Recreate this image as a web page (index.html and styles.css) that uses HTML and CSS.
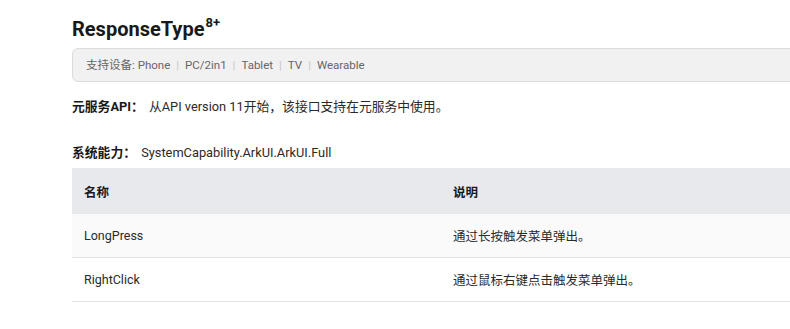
FILE: index.html
```html
<!DOCTYPE html>
<html lang="zh-CN">
<head>
<meta charset="utf-8">
<link rel="stylesheet" href="styles.css">
</head>
<body>
<main class="doc">
  <h2 class="title">ResponseType<sup class="ver">8+</sup></h2>
  <div class="devices">支持设备: Phone<span class="sep">|</span>PC/2in1<span class="sep">|</span>Tablet<span class="sep">|</span>TV<span class="sep">|</span>Wearable</div>
  <p class="meta meta-api"><b>元服务API：</b> 从API version 11开始，该接口支持在元服务中使用。</p>
  <p class="meta meta-cap"><b>系统能力：</b> SystemCapability.ArkUI.ArkUI.Full</p>
  <table class="tbl">
    <thead>
      <tr><th class="c1">名称</th><th>说明</th></tr>
    </thead>
    <tbody>
      <tr class="alt"><td class="c1">LongPress</td><td>通过长按触发菜单弹出。</td></tr>
      <tr><td class="c1">RightClick</td><td>通过鼠标右键点击触发菜单弹出。</td></tr>
    </tbody>
  </table>
</main>
</body>
</html>
```
FILE: styles.css
```css
html, body {
  margin: 0;
  padding: 0;
  background: #fff;
}
body {
  font-family: Roboto, "Noto Sans CJK SC", sans-serif;
  color: #2a2a2a;
  overflow: hidden;
}
.doc {
  padding: 15px 0 0 72px;
  width: 740px;
}
.title {
  margin: 0;
  font-size: 20px;
  line-height: 28px;
  font-weight: 700;
  color: #191919;
}
.ver {
  font-size: 13px;
  line-height: 0;
  vertical-align: 9px;
  margin-left: 1px;
}
.devices {
  margin-top: 5px;
  height: 32px;
  box-sizing: content-box;
  border: 1px solid #dcdcdc;
  border-radius: 6px;
  background: #f1f1f1;
  padding-left: 13px;
  font-size: 11.5px;
  line-height: 32px;
  color: #666;
}
.sep {
  color: #c8c8c8;
  margin: 0 6px;
}
.meta {
  margin: 0;
  font-size: 12.8px;
  line-height: 20px;
}
.meta b {
  font-weight: 700;
  color: #191919;
  margin-right: 2px;
}
.meta-api {
  margin-top: 15px;
}
.meta-cap {
  margin-top: 26px;
}
.tbl {
  margin-top: 5px;
  border-collapse: collapse;
  width: 740px;
  font-size: 12.5px;
  table-layout: fixed;
}
.tbl th {
  background: #e8e9ec;
  text-align: left;
  font-weight: 700;
  height: 46px;
  padding: 0 12px;
  color: #191919;
}
.tbl td {
  height: 43px;
  padding: 0 12px;
  border-bottom: 1px solid #e3e3e3;
}
.tbl .c1 {
  width: 345px;
}
.tbl .alt td {
  background: #fafafa;
}
```
